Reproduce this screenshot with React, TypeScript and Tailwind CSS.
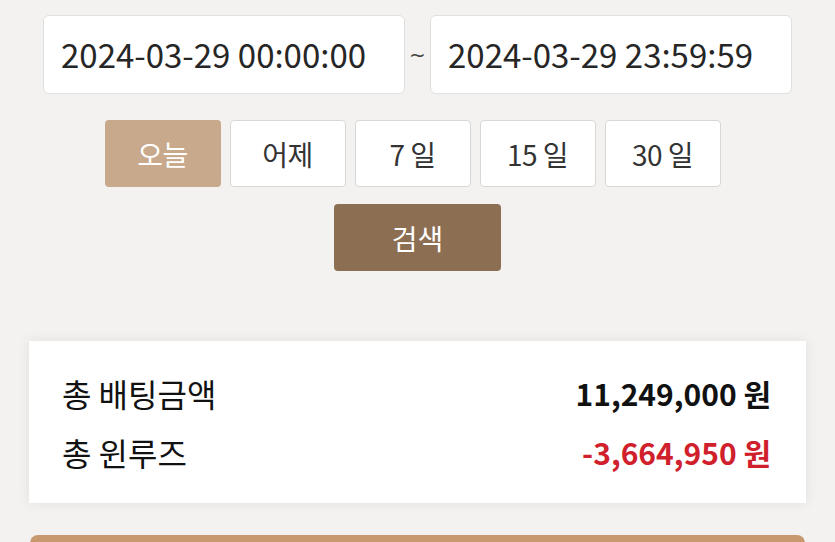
import { useState } from 'react';

const PERIODS = ['오늘', '어제', '7 일', '15 일', '30 일'];

export default function App() {
  const [period, setPeriod] = useState('오늘');

  return (
    <div
      className="w-[835px] h-[542px] overflow-hidden bg-[#f4f2f0] flex flex-col pt-[15px]"
      style={{ fontFamily: '"Noto Sans CJK KR", "Noto Sans", sans-serif' }}
    >
      {/* Date range */}
      <div className="flex items-center px-[43px]">
        <div className="w-[362px] h-[79px] bg-white border border-[#e2e0de] rounded-[6px] flex items-center pl-[17px] text-[33px] text-[#262626]">
          2024-03-29 00:00:00
        </div>
        <div className="w-[25px] text-center text-[20px] text-[#444] font-['DejaVu_Sans',sans-serif]">~</div>
        <div className="w-[362px] h-[79px] bg-white border border-[#e2e0de] rounded-[6px] flex items-center pl-[17px] text-[33px] text-[#262626]">
          2024-03-29 23:59:59
        </div>
      </div>

      {/* Period buttons */}
      <div className="flex justify-center gap-[9px] mt-[26px] pr-[10px]">
        {PERIODS.map((p) => (
          <button
            key={p}
            onClick={() => setPeriod(p)}
            className={`w-[116px] h-[67px] rounded-[4px] text-[28px] tracking-[-0.5px] flex items-center justify-center ${
              period === p
                ? 'bg-[#c8a98b] text-white'
                : 'bg-white border border-[#d9d7d5] text-[#333]'
            }`}
          >
            {p}
          </button>
        ))}
      </div>

      {/* Search */}
      <div className="flex justify-center mt-[17px]">
        <button className="w-[167px] h-[67px] rounded-[4px] bg-[#8c6e53] text-white text-[28px]">
          검색
        </button>
      </div>

      {/* Summary */}
      <div className="mx-[29px] mt-[70px] bg-white shadow-[0_0_12px_rgba(0,0,0,0.08)] pt-[28px] pb-[27px] pl-[33px] pr-[35px] flex flex-col gap-[11px]">
        <div className="flex justify-between items-center h-[48px]">
          <span className="text-[32px] text-[#111]">총 배팅금액</span>
          <span className="text-[30px] font-bold text-[#111]">11,249,000 원</span>
        </div>
        <div className="flex justify-between items-center h-[48px]">
          <span className="text-[32px] text-[#111]">총 윈루즈</span>
          <span className="text-[30px] font-bold text-[#d0202c]">-3,664,950 원</span>
        </div>
      </div>

      <div className="mx-[30px] mt-[32px] h-[20px] shrink-0 rounded-t-[8px] bg-[#c8996f]" />
    </div>
  );
}
